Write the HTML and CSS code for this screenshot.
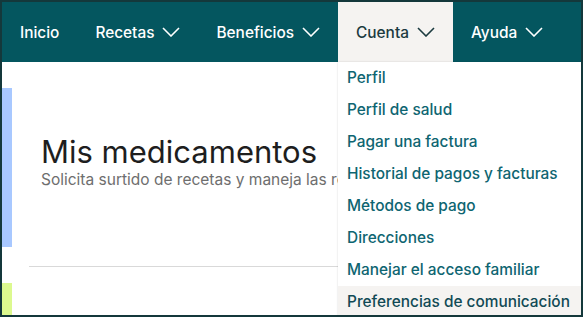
FILE: index.html
```html
<!DOCTYPE html>
<html lang="es">
<head>
<meta charset="utf-8">
<link rel="stylesheet" href="styles.css">
</head>
<body>
<div class="frame">
  <nav class="nav">
    <div class="nav-item">Inicio</div>
    <div class="nav-item">Recetas <svg class="chev" viewBox="0 0 18 10"><path d="M1 1 L9 9 L17 1"/></svg></div>
    <div class="nav-item">Beneficios <svg class="chev" viewBox="0 0 18 10"><path d="M1 1 L9 9 L17 1"/></svg></div>
    <div class="nav-item open">Cuenta <svg class="chev" viewBox="0 0 18 10"><path d="M1 1 L9 9 L17 1"/></svg>
      <ul class="menu">
        <li>Perfil</li>
        <li>Perfil de salud</li>
        <li>Pagar una factura</li>
        <li>Historial de pagos y facturas</li>
        <li>Métodos de pago</li>
        <li>Direcciones</li>
        <li>Manejar el acceso familiar</li>
        <li class="hover">Preferencias de comunicación</li>
      </ul>
    </div>
    <div class="nav-item">Ayuda <svg class="chev" viewBox="0 0 18 10"><path d="M1 1 L9 9 L17 1"/></svg></div>
  </nav>
  <main class="main">
    <section class="block">
      <div class="strip blue"></div>
      <div class="intro">
        <h1>Mis medicamentos</h1>
        <p>Solicita surtido de recetas y maneja las recetas de tu familia</p>
      </div>
    </section>
    <hr class="rule">
    <section class="block">
      <div class="strip green"></div>
      <div class="intro"></div>
    </section>
  </main>
</div>
</body>
</html>
```
FILE: styles.css
```css
html, body {
  margin: 0;
  padding: 0;
  background: #14383b;
}
.frame {
  box-sizing: border-box;
  width: 583px;
  height: 317px;
  border: 2px solid #14383b;
  background: #fff;
  overflow: hidden;
  font-family: Inter, "Noto Sans", sans-serif;
}
.nav {
  display: flex;
  height: 60px;
  background: #04565f;
}
.nav-item {
  position: relative;
  display: flex;
  align-items: center;
  gap: 8px;
  padding: 0 18px;
  color: #fff;
  font-size: 15.4px;
  font-weight: 500;
}
.chev {
  width: 18px;
  height: 10px;
  fill: none;
  stroke: currentColor;
  stroke-width: 1.6;
}
.nav-item.open {
  background: #f5f3f1;
  color: #1b3a3f;
}
.menu {
  position: absolute;
  top: 60px;
  left: 0;
  width: 250px;
  margin: 0;
  padding: 0;
  list-style: none;
  background: #fff;
  box-shadow: 0 0 2px rgba(0,0,0,0.15);
  z-index: 2;
}
.menu li {
  height: 32px;
  line-height: 32px;
  padding-left: 9px;
  color: #0e6571;
  font-size: 15.4px;
  font-weight: 500;
  white-space: nowrap;
}
.menu li.hover {
  background: #f5f3f1;
  color: #114a55;
}
.main {
  padding-top: 26px;
}
.block {
  display: flex;
  gap: 29px;
}
.strip {
  width: 10px;
  flex: none;
}
.strip.blue {
  height: 159px;
  background: #a8c8ff;
}
.strip.green {
  height: 40px;
  background: #dcf98f;
}
.intro {
  width: 297px;
  overflow: hidden;
}
.intro h1 {
  margin: 45px 0 0;
  font-size: 31px;
  font-weight: 400;
  line-height: 38px;
  color: #1e1e1e;
  white-space: nowrap;
}
.intro p {
  margin: 0;
  font-size: 15.5px;
  line-height: 18px;
  color: #6e6e6e;
  white-space: nowrap;
}
.rule {
  margin: 19px 0 16px 27px;
  border: 0;
  border-top: 1px solid #d9d9d9;
}
```
